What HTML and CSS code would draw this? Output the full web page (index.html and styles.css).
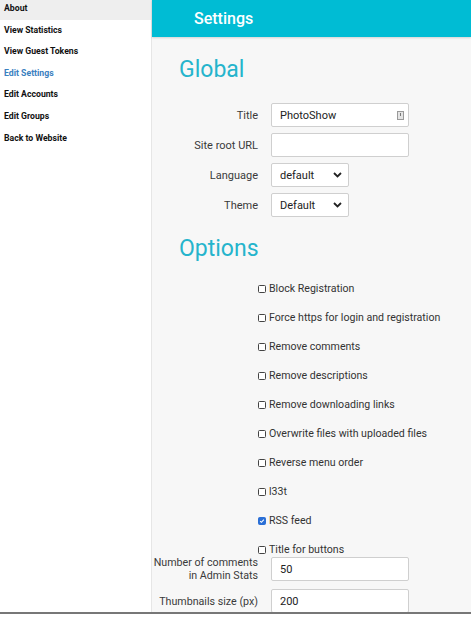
FILE: index.html
```html
<!DOCTYPE html>
<html>
<head>
<meta charset="utf-8">
<link rel="stylesheet" href="styles.css">
</head>
<body>
<div class="page">
  <nav class="sidebar">
    <a class="nav-item active-bg">About</a>
    <a class="nav-item">View Statistics</a>
    <a class="nav-item">View Guest Tokens</a>
    <a class="nav-item current">Edit Settings</a>
    <a class="nav-item">Edit Accounts</a>
    <a class="nav-item">Edit Groups</a>
    <a class="nav-item">Back to Website</a>
  </nav>
  <main class="main">
    <header class="topbar">Settings</header>
    <h2 class="section-title global">Global</h2>
    <div class="form-grid">
      <label class="label">Title</label>
      <div class="field">
        <input class="text-input" type="text" value="PhotoShow">
        <svg class="key-icon" width="7" height="9" viewBox="0 0 7 9"><rect x="0.5" y="0.5" width="6" height="8" fill="#e4e4e4" stroke="#9a9a9a"/><rect x="3" y="2" width="1" height="3" fill="#777"/></svg>
      </div>
      <label class="label">Site root URL</label>
      <div class="field"><input class="text-input" type="text" value=""></div>
      <label class="label">Language</label>
      <div class="field"><select class="select"><option>default</option></select></div>
      <label class="label">Theme</label>
      <div class="field"><select class="select"><option>Default</option></select></div>
    </div>
    <h2 class="section-title options">Options</h2>
    <div class="checks">
      <div class="check-row"><span class="box"></span>Block Registration</div>
      <div class="check-row"><span class="box"></span>Force https for login and registration</div>
      <div class="check-row"><span class="box"></span>Remove comments</div>
      <div class="check-row"><span class="box"></span>Remove descriptions</div>
      <div class="check-row"><span class="box"></span>Remove downloading links</div>
      <div class="check-row"><span class="box"></span>Overwrite files with uploaded files</div>
      <div class="check-row"><span class="box"></span>Reverse menu order</div>
      <div class="check-row"><span class="box"></span>l33t</div>
      <div class="check-row"><span class="box checked"><svg width="8" height="8" viewBox="0 0 8 8"><path d="M1.5 4.2 L3.2 5.8 L6.5 2.2" fill="none" stroke="#fff" stroke-width="1.4"/></svg></span>RSS feed</div>
      <div class="check-row"><span class="box"></span>Title for buttons</div>
    </div>
    <div class="form-grid lower">
      <label class="label nowrap">Number of comments<br>in Admin Stats</label>
      <div class="field"><input class="text-input" type="text" value="50"></div>
      <label class="label nowrap">Thumbnails size (px)</label>
      <div class="field"><input class="text-input" type="text" value="200"></div>
    </div>
  </main>
</div>
<div class="bottom-line"></div>
</body>
</html>
```
FILE: styles.css
```css
* { box-sizing: border-box; }
html, body { margin: 0; padding: 0; background: #fff; }
body { font-family: Roboto, "Liberation Sans", sans-serif; color: #333; }

.page {
  display: flex;
  height: 612px;
  overflow: hidden;
}

.sidebar {
  width: 152px;
  flex: none;
  background: #fff;
  border-right: 1px solid #e6e6e6;
  display: flex;
  flex-direction: column;
}
.nav-item {
  display: block;
  height: 21.6px;
  line-height: 17px;
  padding-left: 4px;
  font-size: 8.7px;
  font-weight: 700;
  color: #111;
}
.nav-item.active-bg { background: #eeeeee; height: 20px; margin-bottom: 1.6px; }
.nav-item.current { color: #3a80c0; }

.main {
  flex: 1;
  background: #f7f7f7;
  display: flex;
  flex-direction: column;
}
.topbar {
  height: 37px;
  flex: none;
  background: #00bcd4;
  color: #fff;
  font-size: 16px;
  font-weight: 500;
  line-height: 37px;
  padding-left: 42px;
  box-shadow: 0 1px 2px rgba(0,0,0,0.15);
}
.section-title {
  margin: 0;
  padding-left: 27px;
  font-size: 23px;
  font-weight: 400;
  line-height: 28px;
  color: #25b4cc;
}
.section-title.global { margin-top: 19px; margin-bottom: 19px; }
.section-title.options { margin-top: 18px; margin-bottom: 18px; }

.form-grid {
  display: grid;
  grid-template-columns: 106px 138px;
  column-gap: 13px;
  row-gap: 6px;
  align-items: center;
}
.form-grid.lower { row-gap: 7px; margin-top: -1px; }
.label {
  text-align: right;
  font-size: 11px;
  line-height: 13px;
  color: #3a3a3a;
}
.label.nowrap { white-space: nowrap; font-size: 10.7px; }
.field { position: relative; display: flex; }
.text-input {
  width: 138px;
  height: 24px;
  border: 1px solid #cfcfcf;
  border-radius: 2px;
  background: #fff;
  padding: 0 0 0 8px;
  font-family: Roboto, "Liberation Sans", sans-serif;
  font-size: 11px;
  color: #222;
  outline: none;
}
.key-icon { position: absolute; left: 126px; top: 8px; }
.select {
  width: 78px;
  height: 24px;
  border: 1px solid #cfcfcf;
  border-radius: 2px;
  background: #fff url("data:image/svg+xml;utf8,<svg xmlns='http://www.w3.org/2000/svg' width='9' height='6' viewBox='0 0 9 6'><path d='M1 1 L4.5 4.5 L8 1' fill='none' stroke='%23222' stroke-width='1.8'/></svg>") no-repeat right 6px center;
  -webkit-appearance: none;
  appearance: none;
  padding: 0 0 0 8px;
  font-family: Roboto, "Liberation Sans", sans-serif;
  font-size: 11px;
  color: #222;
  outline: none;
}

.checks {
  display: flex;
  flex-direction: column;
  row-gap: 14px;
  padding-left: 106px;
}
.check-row {
  display: flex;
  align-items: center;
  height: 15px;
  font-size: 10.6px;
  color: #333;
}
.box {
  width: 8px;
  height: 8px;
  border: 1px solid #444;
  border-radius: 1.5px;
  margin-right: 3px;
  margin-top: 1px;
  background: #fff;
  display: flex;
  align-items: center;
  justify-content: center;
  flex: none;
}
.box.checked { background: #2a6fd6; border-color: #2a6fd6; }
.box.checked svg { display: block; }

.bottom-line { height: 2px; background: #777; }
```
